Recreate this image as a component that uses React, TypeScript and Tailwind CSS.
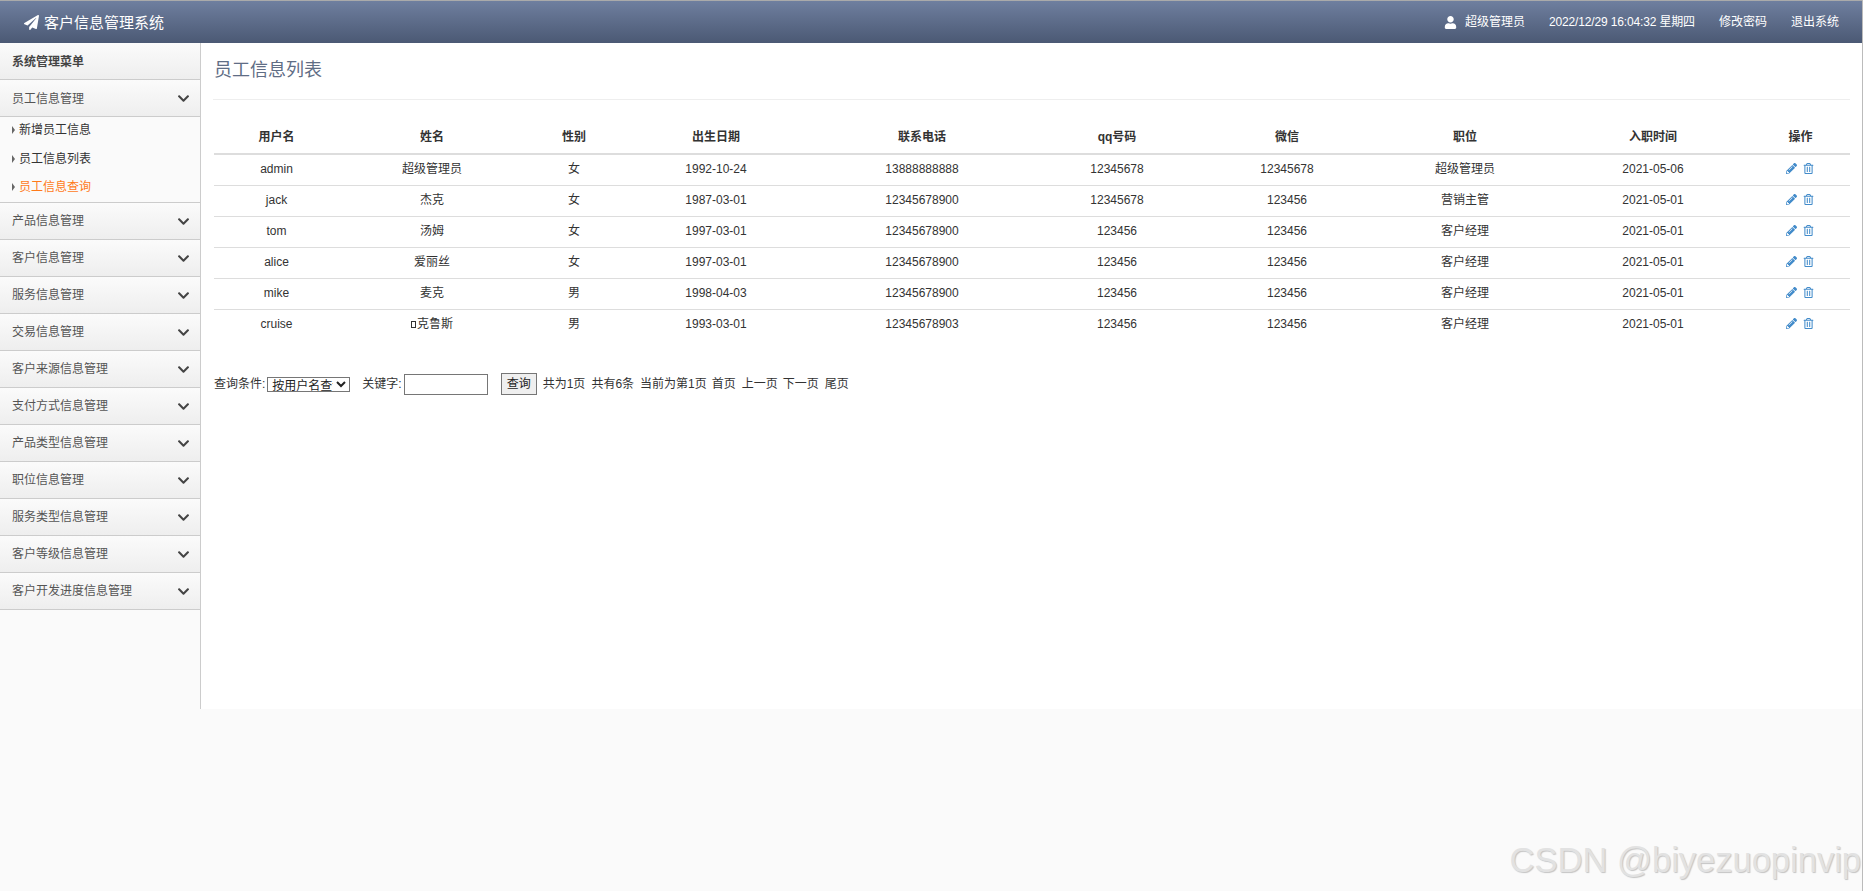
import { FaChevronDown, FaPaperPlane, FaUser, FaPencilAlt, FaRegTrashAlt } from "react-icons/fa";

const groups = ["产品信息管理","客户信息管理","服务信息管理","交易信息管理","客户来源信息管理","支付方式信息管理","产品类型信息管理","职位信息管理","服务类型信息管理","客户等级信息管理","客户开发进度信息管理"];
const rows = [
  ["admin","超级管理员","女","1992-10-24","13888888888","12345678","12345678","超级管理员","2021-05-06"],
  ["jack","杰克","女","1987-03-01","12345678900","12345678","123456","营销主管","2021-05-01"],
  ["tom","汤姆","女","1997-03-01","12345678900","123456","123456","客户经理","2021-05-01"],
  ["alice","爱丽丝","女","1997-03-01","12345678900","123456","123456","客户经理","2021-05-01"],
  ["mike","麦克","男","1998-04-03","12345678900","123456","123456","客户经理","2021-05-01"],
  ["cruise","□克鲁斯","男","1993-03-01","12345678903","123456","123456","客户经理","2021-05-01"],
];
const heads = ["用户名","姓名","性别","出生日期","联系电话","qq号码","微信","职位","入职时间","操作"];

function Group({ label, first }: { label: string; first?: boolean }) {
  return (
    <div className="flex h-[37px] items-center justify-between border-b border-[#ccc] bg-gradient-to-b from-[#fbfbfb] to-[#eeeeee] pl-3 pr-[10px] text-[#555]">
      <span className={first ? "pt-[1px]" : ""}>{label}</span>
      <FaChevronDown className="text-[13px] text-[#444]" />
    </div>
  );
}

function Sub({ label, active, first }: { label: string; active?: boolean; first?: boolean }) {
  return (
    <div className={first ? "flex h-[28px] items-center pb-[2px] pl-3" : "flex h-[28px] items-center pl-3"}>
      <span className="mr-[4px] h-0 w-0 border-y-[4px] border-l-[3px] border-y-transparent border-l-[#666]" />
      <span className={active ? "text-[#ff7a1a]" : "text-[#333]"}>{label}</span>
    </div>
  );
}

export default function App() {
  return (
    <div className="relative flex h-[891px] flex-col overflow-hidden border-r border-[#bbb] bg-[#fafafa] text-[12px] leading-none text-[#333] [font-family:'Liberation_Sans','Noto_Sans_CJK_SC',sans-serif]">
      <header className="flex h-[43px] shrink-0 items-center justify-between border-t border-[#aaa] bg-gradient-to-b from-[#6f7f9f] to-[#4b5974] pl-6 pr-[23px] text-white">
        <div className="flex items-center gap-[5px] text-[15px]">
          <FaPaperPlane className="text-[15px]" />
          <span>客户信息管理系统</span>
        </div>
        <div className="flex items-center">
          <FaUser className="mr-[8px] text-[13px]" />
          <span className="mr-6">超级管理员</span>
          <span className="mr-6 tracking-[-0.15px]">2022/12/29 16:04:32 星期四</span>
          <span className="mr-6">修改密码</span>
          <span>退出系统</span>
        </div>
      </header>
      <div className="flex h-[666px] shrink-0">
        <aside className="w-[201px] shrink-0 border-r border-[#ccc] bg-[#fafafa]">
          <div className="flex h-[37px] items-center border-b border-[#ccc] bg-gradient-to-b from-[#fbfbfb] to-[#eeeeee] pl-3 pt-[1px] font-bold text-[#444]">系统管理菜单</div>
          <Group label="员工信息管理" first />
          <div className="border-b border-[#ccc] pb-[1px]">
            <Sub label="新增员工信息" first />
            <Sub label="员工信息列表" />
            <Sub label="员工信息查询" active />
          </div>
          {groups.map((g) => <Group key={g} label={g} />)}
        </aside>
        <main className="flex-1 bg-white px-[13px]">
          <h1 className="-ml-[1px] flex h-[57px] items-center border-b border-[#eee] pb-[3px] pl-[1px] text-[18px] font-normal text-[#5f6d85]">员工信息列表</h1>
          <table className="mt-[21px] w-[1636px] table-fixed border-collapse text-center">
            <colgroup>
              <col className="w-[125px]" /><col className="w-[186px]" /><col className="w-[98px]" /><col className="w-[186px]" /><col className="w-[226px]" /><col className="w-[164px]" /><col className="w-[176px]" /><col className="w-[180px]" /><col className="w-[196px]" /><col className="w-[99px]" />
            </colgroup>
            <thead>
              <tr className="h-[33px] border-b-2 border-[#ddd]">
                {heads.map((h) => <th key={h} className="font-bold text-[#333]">{h}</th>)}
              </tr>
            </thead>
            <tbody>
              {rows.map((r, i) => (
                <tr key={r[0]} className={i < rows.length - 1 ? "h-[31px] border-b border-[#ddd]" : "h-[31px]"}>
                  {r.map((c, j) => (
                    <td key={j} className="pb-[1px]">
                      {c.startsWith("□") ? <><span className="mr-[1px] inline-block h-[7px] w-[5px] border border-[#333]" />{c.slice(1)}</> : c}
                    </td>
                  ))}
                  <td>
                    <span className="relative -left-[1px] inline-flex items-center gap-[6px] text-[#428bca]">
                      <FaPencilAlt className="text-[11px]" />
                      <FaRegTrashAlt className="text-[11px]" />
                    </span>
                  </td>
                </tr>
              ))}
            </tbody>
          </table>
          <div className="mt-[32px] flex h-[24px] items-center whitespace-pre">
            <span>查询条件:</span>
            <select className="ml-[2px] h-[15px] w-[83px] border border-[#767676] bg-white pl-0 text-[12px] leading-none text-[#222] [appearance:auto]">
              <option>按用户名查询</option>
            </select>
            <span className="ml-[12px]">关键字:</span>
            <input className="ml-[2px] h-[21px] w-[84px] border border-[#767676] bg-white" />
            <button className="ml-[13px] h-[22px] w-[36px] border border-[#767676] bg-[#efefef] text-[#222]">查询</button>
            <span className="ml-[6px]">共为1页</span>
            <span className="ml-[6px]">共有6条</span>
            <span className="ml-[6px]">当前为第1页</span>
            <span className="ml-[5px]">首页</span>
            <span className="ml-[6px]">上一页</span>
            <span className="ml-[5px]">下一页</span>
            <span className="ml-[6px]">尾页</span>
          </div>
        </main>
      </div>
      <div className="absolute bottom-[14px] right-[1px] text-[34.5px] leading-none text-[#e2e2e2] [text-shadow:1px_1px_1px_#c4c4c4]">CSDN @biyezuopinvip</div>
    </div>
  );
}
